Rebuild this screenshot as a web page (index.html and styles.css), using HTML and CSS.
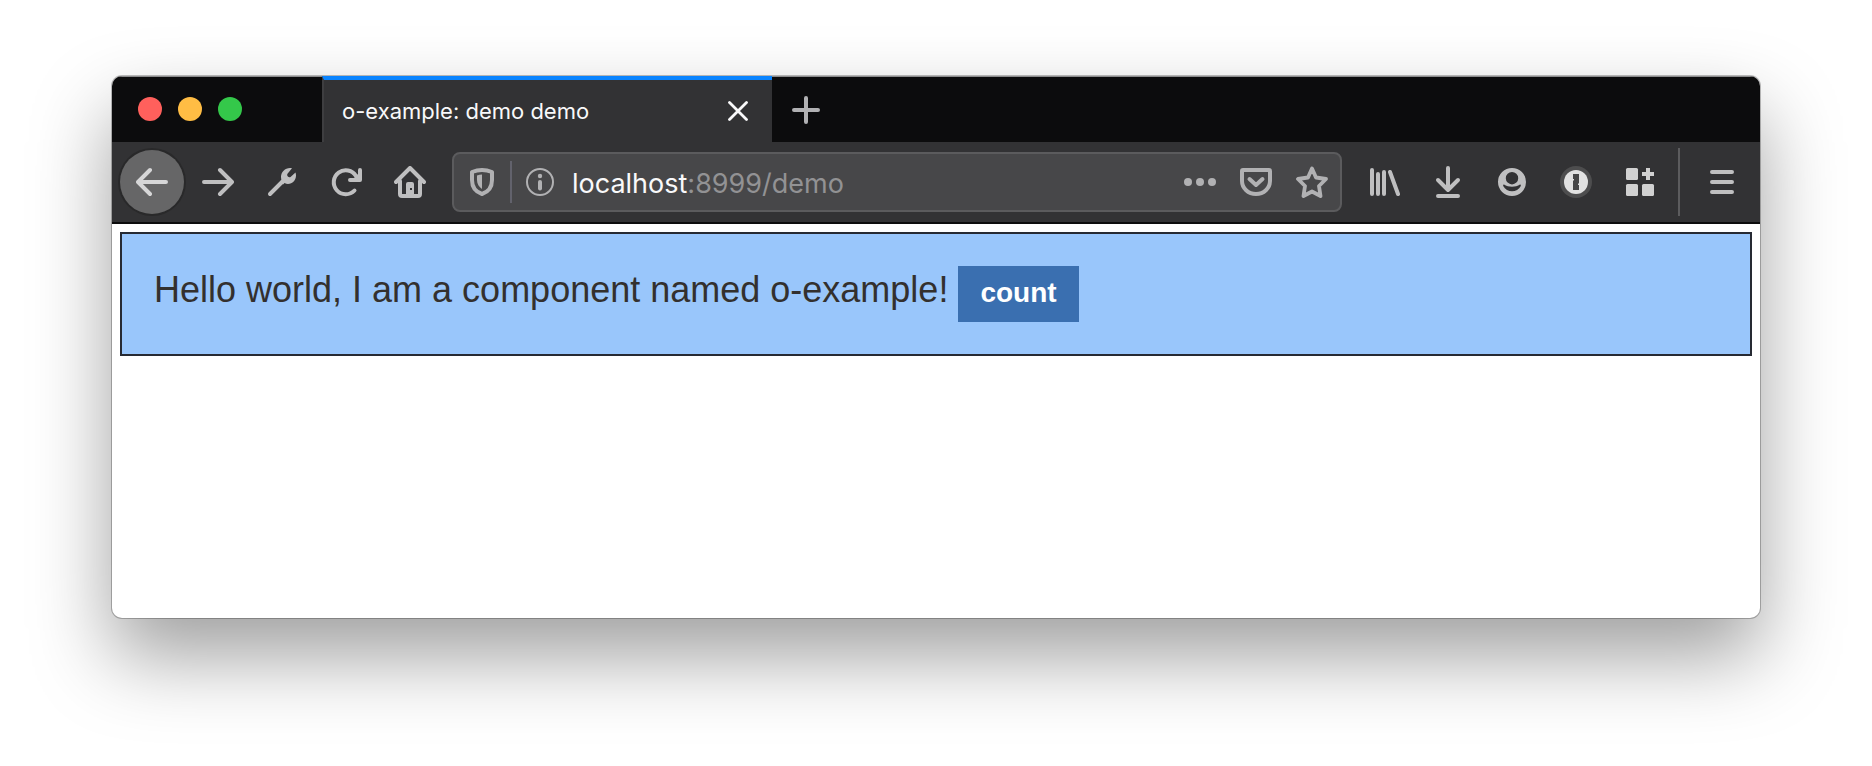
FILE: index.html
```html
<!DOCTYPE html>
<html lang="en">
<head>
<meta charset="utf-8">
<title>o-example: demo demo</title>
<link rel="stylesheet" href="styles.css">
</head>
<body>
<div class="window">
  <header class="tabstrip">
    <div class="lights">
      <button class="light red" aria-label="Close window"></button>
      <button class="light yellow" aria-label="Minimize window"></button>
      <button class="light green" aria-label="Zoom window"></button>
    </div>
    <div class="tab">
      <span class="tab-title">o-example: demo demo</span>
      <button class="tab-close" aria-label="Close tab">
        <svg width="20" height="20" viewBox="0 0 20 20"><path d="M1.500 1.500l17 17M18.500 1.500l-17 17" stroke-width="2.800"/></svg>
      </button>
    </div>
    <button class="new-tab" aria-label="New tab">
      <svg width="28" height="28" viewBox="0 0 28 28"><path d="M14 2v24M2 14h24" stroke-width="4"/></svg>
    </button>
  </header>
  <nav class="toolbar">
    <button class="tool back" aria-label="Back">
      <svg width="32" height="32" viewBox="0 0 32 32"><path d="M30 16H3M14 4L2 16l12 12" stroke-width="4"/></svg>
    </button>
    <button class="tool" aria-label="Forward">
      <svg width="32" height="32" viewBox="0 0 32 32"><path d="M2 16h27M18 4l12 12-12 12" stroke-width="4"/></svg>
    </button>
    <button class="tool" aria-label="Developer tools">
      <svg width="32" height="32" viewBox="0 0 32 32"><path d="M4 28L17 15" stroke-width="4"/><path class="solid" d="M24 2c-5 0-9 4-9 9 0 1 .2 2 .5 3l-1.500 1.500 3 3L18.500 17c1.200.6 2.400 1 3.500 1 4.500 0 8-4 8-8.500 0-1-.2-2-.5-3L24.500 11c-1.500 1-4-1-3.200-3L26 2.300C25.300 2 24.700 2 24 2z"/></svg>
    </button>
    <button class="tool" aria-label="Reload">
      <svg width="32" height="32" viewBox="0 0 32 32"><path d="M24.500 24.500A12 12 0 1 1 26 10" stroke-width="4"/><path d="M30 4v10H20" stroke-width="4"/><path class="solid" d="M30 6l-8 8h8z"/></svg>
    </button>
    <button class="tool" aria-label="Home">
      <svg width="32" height="32" viewBox="0 0 32 32"><path d="M2 16L16 2l14 14M6 15v13q0 2 2 2h16q2 0 2-2V15" stroke-width="4"/><path class="solid" fill-rule="evenodd" d="M12 30V18q0-2 2-2h4q2 0 2 2v12zM16 22v2h2v-2z"/></svg>
    </button>
    <div class="urlbar">
      <button class="shield" aria-label="Tracking protection">
        <svg width="26" height="30" viewBox="0 0 26 30"><path d="M13 3q5 0 10 2v8c0 7-4 12-10 14C7 25 3 20 3 13V5q5-2 10-2z" stroke-width="4"/><path class="solid" d="M13 7.500V22C10 20 8 17 8 13V8.500q2.500-1 5-1z"/></svg>
      </button>
      <button class="info" aria-label="Site information">
        <svg width="28" height="28" viewBox="0 0 28 28"><circle cx="14" cy="14" r="13" stroke-width="2"/><path d="M14 14v6.500" stroke-width="4"/><circle class="solid" cx="14" cy="8" r="2.200"/></svg>
      </button>
      <div class="address" role="textbox" aria-label="Address" contenteditable="true" spellcheck="false">localhost<span class="dim">:8999/demo</span></div>
      <div class="url-actions">
        <button class="action" aria-label="Page actions">
          <svg width="32" height="32" viewBox="0 0 32 32"><g class="solid"><circle cx="4" cy="16" r="4"/><circle cx="16" cy="16" r="4"/><circle cx="28" cy="16" r="4"/></g></svg>
        </button>
        <button class="action" aria-label="Save to Pocket">
          <svg width="32" height="32" viewBox="0 0 32 32"><path d="M3 4h26q1 0 1 1v10a14 13 0 0 1-28 0V5q0-1 1-1z" stroke-width="4"/><path d="M9.500 13l6.500 6 6.500-6" stroke-width="4"/></svg>
        </button>
        <button class="action" aria-label="Bookmark this page">
          <svg width="32" height="32" viewBox="0 0 32 32"><path d="M16 2.500l4 9 10 1.500-7 7 1.500 10L16 25.500 7.500 30 9 20l-7-7 10-1.500z" stroke-width="3.800"/></svg>
        </button>
      </div>
    </div>
    <button class="tool" aria-label="Library">
      <svg width="32" height="32" viewBox="0 0 32 32"><path d="M4 4v24M10 8v20M16 6v22M22 6l8 22" stroke-width="4"/></svg>
    </button>
    <button class="tool" aria-label="Downloads">
      <svg width="32" height="32" viewBox="0 0 32 32"><path d="M16 2v22M6 14l10 10 10-10M6 30h20" stroke-width="4"/></svg>
    </button>
    <button class="tool" aria-label="Account">
      <svg width="32" height="32" viewBox="0 0 32 32"><path class="solid" fill-rule="evenodd" d="M16 2a14 14 0 1 0 0 28 14 14 0 0 0 0-28zM16 6a6.200 6.200 0 0 1 0 12.400A6.200 6.200 0 0 1 16 6zM8 18.500c4.500 3 11.500 3 16 0 .7 0 1 .7.800 1.500-3.500 7-14 7-17.600 0-.2-.8.100-1.500.8-1.500z"/></svg>
    </button>
    <button class="tool" aria-label="Password manager">
      <svg width="32" height="32" viewBox="0 0 32 32"><circle cx="16" cy="16" r="16" fill="#4d4d4e"/><circle cx="16" cy="16" r="12" fill="#e1e1e1"/><path d="M13 8h6v9l-1 1v1h1v5h-6v-9l1-1v-1h-1z" fill="#464647"/></svg>
    </button>
    <button class="tool" aria-label="Extensions">
      <svg width="32" height="32" viewBox="0 0 32 32"><g fill="#d1d1d1"><rect x="2" y="2" width="12" height="12" rx="1.500"/><rect x="2" y="18" width="12" height="12" rx="1.500"/><rect x="18" y="18" width="12" height="12" rx="1.500"/><path d="M22 2h4v4h4v4h-4v4h-4v-4h-4V6h4z"/></g></svg>
    </button>
    <button class="tool menu" aria-label="Open menu">
      <svg width="32" height="32" viewBox="0 0 32 32"><path d="M6 6h20M6 16h20M6 26h20" stroke-width="4"/></svg>
    </button>
  </nav>
  <main class="page">
    <section class="example">Hello world, I am a component named o-example! <button class="count">count</button></section>
  </main>
</div>
</body>
</html>
```
FILE: styles.css
```css
* {
  box-sizing: border-box;
}

body {
  margin: 0;
  min-height: 100vh;
  padding: 76px 112px 148px;
  display: flex;
  background: #fff;
  font-family: Inter, sans-serif;
}

button {
  margin: 0;
  padding: 0;
  border: 0;
  background: none;
  color: inherit;
  font: inherit;
}

svg {
  display: block;
  fill: none;
  stroke: currentColor;
  stroke-linecap: round;
  stroke-linejoin: round;
}

.solid {
  fill: currentColor;
  stroke: none;
}

svg [fill]:not(.solid) {
  stroke: none;
}

.window {
  flex: 1;
  display: flex;
  flex-direction: column;
  overflow: hidden;
  border-radius: 10px;
  background: #fff;
  box-shadow: 0 0 0 1px rgba(0, 0, 0, 0.25), 0 38px 80px rgba(0, 0, 0, 0.38);
}

.tabstrip {
  height: 66px;
  display: flex;
  background: #0c0c0d;
  border-top: 1px solid #8c8c8d;
}

.lights {
  width: 210px;
  padding: 20px 26px;
  display: flex;
  gap: 16px;
}

.light {
  width: 24px;
  height: 24px;
  border-radius: 50%;
}

.red { background: #ff605c; }
.yellow { background: #ffbd44; }
.green { background: #34c84a; }

.tab {
  width: 450px;
  margin-top: -1px;
  padding: 0 24px 0 18px;
  display: flex;
  align-items: center;
  justify-content: space-between;
  border-top: 4px solid #0a84ff;
  border-left: 2px solid #3e3e40;
  background: #323234;
  color: #f9f9fa;
  font-size: 22px;
}

.new-tab {
  width: 68px;
  display: grid;
  place-items: center;
  color: #b1b1b3;
}

.toolbar {
  height: 82px;
  padding: 0 6px 0 8px;
  display: flex;
  align-items: center;
  background: #323234;
  border-bottom: 2px solid #0c0c0d;
  color: #bfbfc0;
}

.tool {
  flex: none;
  width: 64px;
  height: 64px;
  display: grid;
  place-items: center;
}

.back {
  margin-right: 2px;
  border-radius: 50%;
  background: #666667;
  box-shadow: 0 0 0 2px #29292a;
  color: #d6d6d7;
}

.menu {
  position: relative;
  margin-left: 18px;
}

.menu::before {
  content: "";
  position: absolute;
  left: -12px;
  top: -2px;
  bottom: -2px;
  width: 2px;
  background: #5c5c5e;
}

.urlbar {
  flex: 1;
  min-width: 0;
  height: 60px;
  margin: 0 10px;
  display: flex;
  align-items: center;
  border: 2px solid #5b5b5d;
  border-radius: 8px;
  background: #474749;
  color: #b1b1b3;
}

.shield {
  width: 58px;
  height: 42px;
  padding-left: 15px;
  border-right: 2px solid #62626c;
}

.info {
  padding: 0 18px 0 14px;
}

.address {
  flex: 1;
  min-width: 0;
  padding-top: 2px;
  overflow: hidden;
  white-space: nowrap;
  color: #f9f9fa;
  font-size: 27px;
}

.dim {
  color: #929294;
}

.url-actions {
  padding-right: 12px;
  display: flex;
  gap: 24px;
}

.page {
  flex: 1;
  padding: 8px;
  font-family: "Liberation Sans", Arial, sans-serif;
}

.example {
  padding: 32px;
  border: 2px solid #262a33;
  background: #99c6fb;
  color: #33302e;
  font-size: 36px;
  line-height: 40px;
}

.count {
  padding: 11px 22px 13px;
  background: #3a6fb0;
  color: #fff;
  font-size: 28px;
  font-weight: 700;
  line-height: 32px;
}
```
